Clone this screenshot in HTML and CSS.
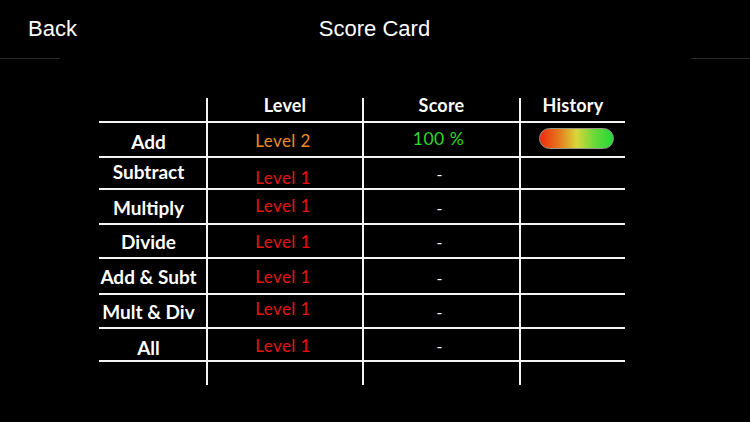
FILE: index.html
```html
<!DOCTYPE html>
<html>
<head>
<meta charset="utf-8">
<link rel="stylesheet" href="styles.css">
</head>
<body>
<div class="screen">
  <header class="nav">
    <span class="back">Back</span>
    <span class="title">Score Card</span>
    <span class="spacer"></span>
  </header>
  <div class="hairline"><span class="seg left"></span><span class="seg right"></span></div>

  <div class="table">
    <div class="c h"></div>
    <div class="c h head">Level</div>
    <div class="c h head">Score</div>
    <div class="c h head last">History</div>

    <div class="c lab d2">Add</div>
    <div class="c lv l2 d1">Level 2</div>
    <div class="c sc pct">100 %</div>
    <div class="c last"><span class="hist"></span></div>

    <div class="c lab u2">Subtract</div>
    <div class="c lv d4">Level 1</div>
    <div class="c sc">-</div>
    <div class="c last"></div>

    <div class="c lab d1">Multiply</div>
    <div class="c lv u1">Level 1</div>
    <div class="c sc d1">-</div>
    <div class="c last"></div>

    <div class="c lab">Divide</div>
    <div class="c lv">Level 1</div>
    <div class="c sc">-</div>
    <div class="c last"></div>

    <div class="c lab">Add &amp; Subt</div>
    <div class="c lv">Level 1</div>
    <div class="c sc d1">-</div>
    <div class="c last"></div>

    <div class="c lab">Mult &amp; Div</div>
    <div class="c lv u3">Level 1</div>
    <div class="c sc">-</div>
    <div class="c last"></div>

    <div class="c lab d3">All</div>
    <div class="c lv d1">Level 1</div>
    <div class="c sc d1">-</div>
    <div class="c last"></div>

    <div class="c t"></div>
    <div class="c t"></div>
    <div class="c t"></div>
    <div class="c t last"></div>
  </div>
</div>
</body>
</html>
```

FILE: styles.css
```css
html, body {
  margin: 0;
  padding: 0;
  background: #000;
}
.screen {
  width: 750px;
  height: 422px;
  background: #000;
  color: #fff;
  overflow: hidden;
}
.nav {
  height: 58px;
  display: flex;
  align-items: center;
  font-family: "Liberation Sans", Arial, sans-serif;
  font-size: 22px;
  color: #fff;
}
.back {
  width: 110px;
  padding-left: 28px;
  box-sizing: border-box;
}
.title {
  flex: 1;
  text-align: center;
  padding-right: 1px;
}
.spacer {
  width: 110px;
}
.hairline {
  height: 1px;
  display: flex;
  justify-content: space-between;
}
.seg {
  height: 1px;
  background: #2a2a2a;
}
.seg.left { width: 60px; }
.seg.right { width: 59px; }

.table {
  margin: 39px 0 0 99px;
  width: 526px;
  display: grid;
  grid-template-columns: 109px 156px 157px 104px;
  grid-template-rows: 25px 35px 32px 35px 34px 36px 34px 33px 23px;
  font-family: Lato, "Open Sans", sans-serif;
}
.c {
  box-sizing: border-box;
  border-right: 2px solid #f4f4f4;
  border-bottom: 2px solid #f4f4f4;
  display: flex;
  align-items: center;
  justify-content: center;
}
.c.last { border-right: none; }
.c.t { border-bottom: none; }
.c.h {
  align-items: flex-end;
  padding-bottom: 5px;
}
.head {
  font-size: 18px;
  font-weight: 700;
  letter-spacing: 0.2px;
}
.lab {
  font-size: 19px;
  font-weight: 700;
  justify-content: center;
  padding-right: 8px;
  white-space: nowrap;
}
.lv {
  font-size: 17px;
  color: #e4150f;
  letter-spacing: 0.4px;
  padding-right: 4px;
}
.lv.l2 { color: #ee8a22; }
.sc {
  font-size: 16px;
  color: #fff;
  padding-right: 4px;
}
.pct {
  font-size: 17.5px;
  color: #2bd82b;
  letter-spacing: 0.5px;
  padding-right: 6px;
  padding-bottom: 3px;
}
.hist {
  width: 75px;
  height: 21px;
  box-sizing: border-box;
  border: 1px solid #9a9a8a;
  border-radius: 11px;
  background: linear-gradient(to right, #ee2a10 0%, #e6761c 25%, #d9d63a 50%, #6ad83a 75%, #22d838 100%);
  margin-left: 6px;
  margin-top: -2px;
}
.d1 { padding-top: 2px; }
.d2 { padding-top: 4px; }
.d3 { padding-top: 6px; }
.d4 { padding-top: 8px; }
.u1 { padding-bottom: 2px; }
.u2 { padding-bottom: 4px; }
.u3 { padding-bottom: 6px; }
```
